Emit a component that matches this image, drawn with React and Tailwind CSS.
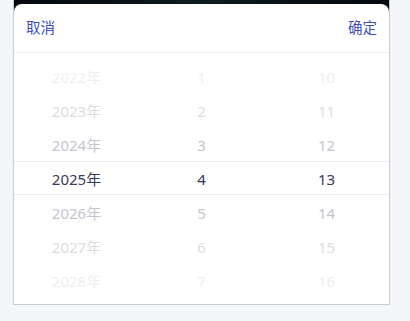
import React from 'react';

const years = ['2022年', '2023年', '2024年', '2025年', '2026年', '2027年', '2028年'];
const months = ['1', '2', '3', '4', '5', '6', '7'];
const days = ['10', '11', '12', '13', '14', '15', '16'];

// faded colours by distance from the selected row
const tones = [
  'text-[#eeeff2]',
  'text-[#dcdde3]',
  'text-[#c4c5cf]',
  'text-[#363a5c]',
  'text-[#c4c5cf]',
  'text-[#dcdde3]',
  'text-[#eeeff2]',
];

const Column = ({ items }) => (
  <div className="flex flex-1 flex-col">
    {items.map((item, i) => (
      <div key={item} className={`flex h-[34px] items-center justify-center pt-[2px] text-[15px] ${tones[i]}`}>
        {item}
      </div>
    ))}
  </div>
);

const App = () => {
  return (
    <div
      className="min-h-screen bg-[#f4f5f9]"
      style={{ fontFamily: '"Noto Sans", "Noto Sans CJK SC", sans-serif' }}
    >
      <div className="ml-[13px] w-[377px] border-x border-b border-[#c9cacf] bg-gradient-to-r from-[#05080b] via-[#0c1d21] to-[#05080b] pt-[4px]">
        <div className="overflow-hidden rounded-t-lg bg-white">
          <div className="flex h-[49px] items-center justify-between border-b border-[#ebedf0] px-3 text-[14.5px] text-[#3d4fbf]">
            <span>取消</span>
            <span>确定</span>
          </div>
          <div className="relative h-[251px] overflow-hidden pt-[6px]">
            <div className="absolute inset-x-0 top-[108px] h-[34px] border-y border-[#ebedf0]" />
            <div className="relative flex">
              <Column items={years} />
              <Column items={months} />
              <Column items={days} />
            </div>
          </div>
        </div>
      </div>
    </div>
  );
};

export default App;
